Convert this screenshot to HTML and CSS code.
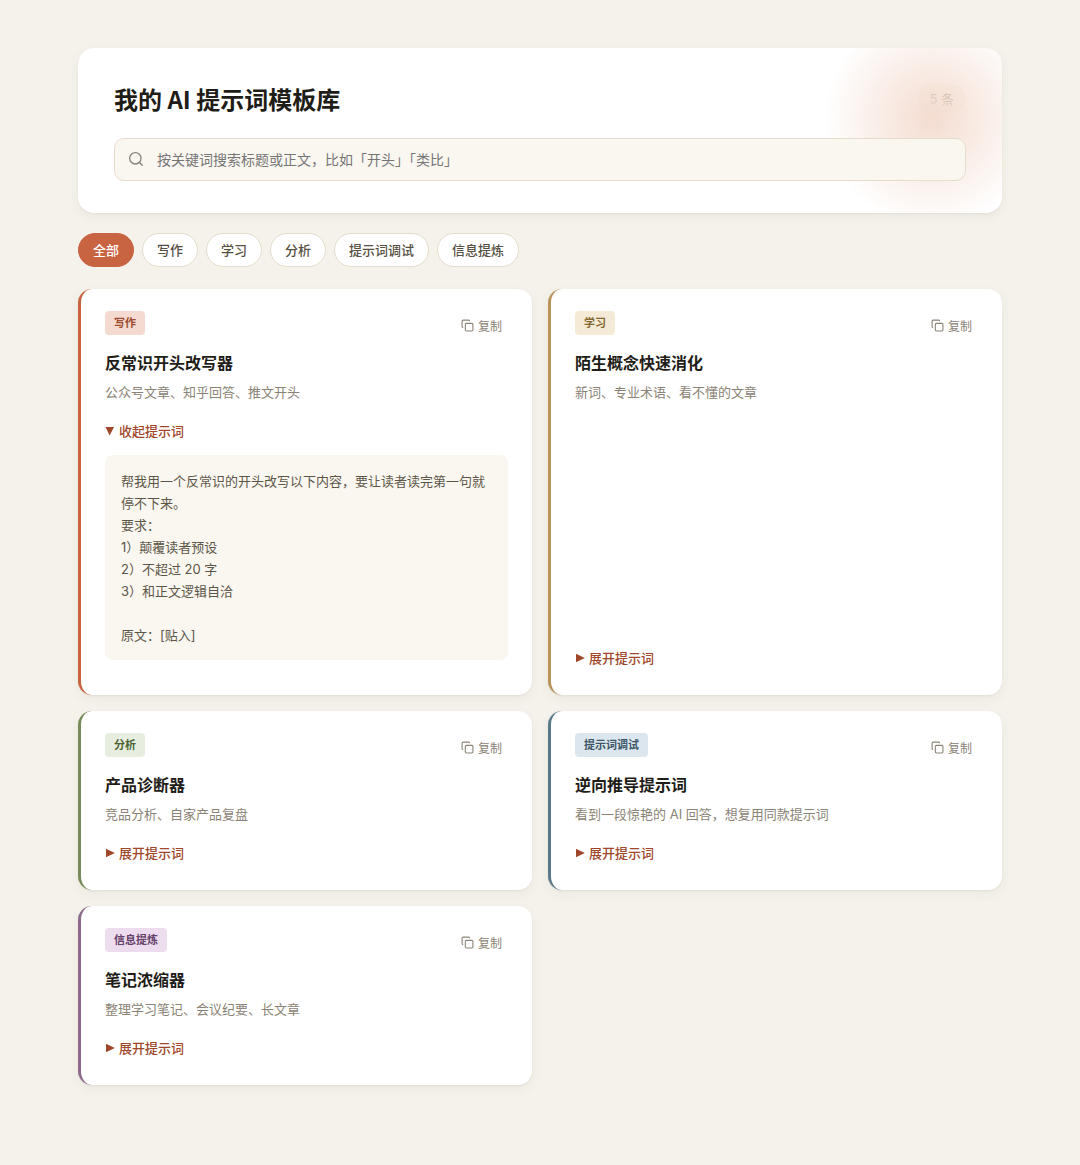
FILE: index.html
```html
<!DOCTYPE html>
<html lang="zh-CN">

<head>
    <meta charset="UTF-8">
    <meta name="viewport" content="width=device-width, initial-scale=1.0">
    <title>我的 AI 提示词模板库</title>
    <link rel="stylesheet" href="styles.css">
</head>

<body>
    <!-- shared icons -->
    <svg class="sprite" aria-hidden="true">
        <symbol id="icon-copy" viewBox="0 0 24 24">
            <rect x="8" y="8" width="14" height="14" rx="2" />
            <path d="M4 16c-1.1 0-2-.9-2-2V4c0-1.1.9-2 2-2h10c1.1 0 2 .9 2 2" />
        </symbol>
        <symbol id="icon-right" viewBox="0 0 10 10">
            <path d="M1 0.8L9.8 5L1 9.2z" />
        </symbol>
        <symbol id="icon-down" viewBox="0 0 10 10">
            <path d="M0.4 1H9L4.7 9.6z" />
        </symbol>
    </svg>

    <div class="container">
        <header class="header">
            <div class="header-top">
                <h1>我的 AI 提示词模板库</h1>
                <span class="count">5 条</span>
            </div>
            <div class="search">
                <svg class="search-icon" viewBox="0 0 24 24" aria-hidden="true">
                    <circle cx="11" cy="11" r="8.5" />
                    <path d="M21.3 21.3l-4.3-4.3" />
                </svg>
                <input type="text" class="search-input" aria-label="搜索提示词" placeholder="按关键词搜索标题或正文，比如「开头」「类比」">
            </div>
        </header>

        <nav class="filters" aria-label="分类">
            <button type="button" class="chip active">全部</button>
            <button type="button" class="chip">写作</button>
            <button type="button" class="chip">学习</button>
            <button type="button" class="chip">分析</button>
            <button type="button" class="chip">提示词调试</button>
            <button type="button" class="chip">信息提炼</button>
        </nav>

        <main class="grid">
            <article class="card writing">
                <div class="card-top">
                    <span class="tag">写作</span>
                    <button type="button" class="copy"><svg aria-hidden="true"><use href="#icon-copy" /></svg>复制</button>
                </div>
                <h2>反常识开头改写器</h2>
                <p class="desc">公众号文章、知乎回答、推文开头</p>
                <button type="button" class="toggle" aria-expanded="true"><svg aria-hidden="true"><use href="#icon-down" /></svg>收起提示词</button>
                <div class="prompt">帮我用一个反常识的开头改写以下内容，要让读者读完第一句就停不下来。
要求：
1）颠覆读者预设
2）不超过 20 字
3）和正文逻辑自洽

原文：[贴入]</div>
            </article>

            <article class="card study">
                <div class="card-top">
                    <span class="tag">学习</span>
                    <button type="button" class="copy"><svg aria-hidden="true"><use href="#icon-copy" /></svg>复制</button>
                </div>
                <h2>陌生概念快速消化</h2>
                <p class="desc">新词、专业术语、看不懂的文章</p>
                <button type="button" class="toggle" aria-expanded="false"><svg aria-hidden="true"><use href="#icon-right" /></svg>展开提示词</button>
            </article>

            <article class="card analysis">
                <div class="card-top">
                    <span class="tag">分析</span>
                    <button type="button" class="copy"><svg aria-hidden="true"><use href="#icon-copy" /></svg>复制</button>
                </div>
                <h2>产品诊断器</h2>
                <p class="desc">竞品分析、自家产品复盘</p>
                <button type="button" class="toggle" aria-expanded="false"><svg aria-hidden="true"><use href="#icon-right" /></svg>展开提示词</button>
            </article>

            <article class="card debug">
                <div class="card-top">
                    <span class="tag">提示词调试</span>
                    <button type="button" class="copy"><svg aria-hidden="true"><use href="#icon-copy" /></svg>复制</button>
                </div>
                <h2>逆向推导提示词</h2>
                <p class="desc">看到一段惊艳的 AI 回答，想复用同款提示词</p>
                <button type="button" class="toggle" aria-expanded="false"><svg aria-hidden="true"><use href="#icon-right" /></svg>展开提示词</button>
            </article>

            <article class="card extract">
                <div class="card-top">
                    <span class="tag">信息提炼</span>
                    <button type="button" class="copy"><svg aria-hidden="true"><use href="#icon-copy" /></svg>复制</button>
                </div>
                <h2>笔记浓缩器</h2>
                <p class="desc">整理学习笔记、会议纪要、长文章</p>
                <button type="button" class="toggle" aria-expanded="false"><svg aria-hidden="true"><use href="#icon-right" /></svg>展开提示词</button>
            </article>
        </main>
    </div>
</body>

</html>
```
FILE: styles.css
```css
* {
    margin: 0;
    padding: 0;
    box-sizing: border-box;
}

body {
    min-height: 100vh;
    background-color: #f5f2eb;
    color: #1f1d18;
    font-family: Inter, "Noto Sans CJK SC", sans-serif;
    font-size: 13px;
}

button,
input {
    font-family: inherit;
}

button {
    cursor: pointer;
}

.sprite {
    display: none;
}

.container {
    max-width: 980px;
    margin: 0 auto;
    padding: 48px 28px 80px;
}

/* header */
.header {
    position: relative;
    overflow: hidden;
    margin-bottom: 20px;
    padding: 32px 36px;
    background-color: #fff;
    border-radius: 16px;
    box-shadow: 0 1px 2px rgba(60, 50, 30, 0.06), 0 4px 12px rgba(60, 50, 30, 0.05);
}

/* soft glow in the corner, lies over the count badge */
.header::before {
    content: "";
    position: absolute;
    top: -80px;
    right: -80px;
    width: 300px;
    height: 300px;
    background: radial-gradient(closest-side, #f4dcd0 0%, transparent 72%);
    pointer-events: none;
}

.header-top {
    display: flex;
    justify-content: space-between;
    align-items: center;
    margin-bottom: 20px;
}

h1 {
    font-family: "Noto Sans CJK SC", sans-serif;
    font-size: 24px;
    line-height: 38px;
    font-weight: 700;
}

.count {
    padding: 4px 12px;
    background-color: #faf7f0;
    border-radius: 14px;
    color: #8a8375;
    font-size: 13px;
    line-height: 20px;
}

.search {
    position: relative;
}

.search-icon {
    position: absolute;
    left: 14px;
    top: 13px;
    width: 16px;
    height: 16px;
    fill: none;
    stroke: #8a8375;
    stroke-width: 2;
    stroke-linecap: round;
}

.search-input {
    display: block;
    width: 100%;
    height: 43px;
    padding: 0 16px 0 42px;
    background-color: #faf7f0;
    border: 1px solid #e5dccb;
    border-radius: 10px;
    color: #1f1d18;
    font-size: 14px;
}

.search-input::placeholder {
    color: #757575;
}

/* filters */
.filters {
    display: flex;
    flex-wrap: wrap;
    gap: 8px;
    margin-bottom: 22px;
}

.chip {
    height: 34px;
    padding: 0 14px 2px;
    background-color: #fff;
    border: 1px solid #e5dccb;
    border-radius: 17px;
    color: #565042;
    font-size: 13px;
    font-weight: 500;
}

.chip.active {
    background-color: #c96442;
    border-color: #c96442;
    color: #fff;
}

/* cards */
.grid {
    display: grid;
    grid-template-columns: 1fr 1fr;
    gap: 16px;
}

.card {
    display: flex;
    flex-direction: column;
    align-items: flex-start;
    padding: 22px 24px;
    background-color: #fff;
    border-left: 3px solid #c96442;
    border-radius: 14px;
    box-shadow: 0 1px 2px rgba(60, 50, 30, 0.06), 0 4px 12px rgba(60, 50, 30, 0.05);
}

.card-top {
    display: flex;
    justify-content: space-between;
    align-items: flex-start;
    align-self: stretch;
    margin-bottom: 9px;
}

.tag {
    padding: 0 9px;
    background-color: #f5dad1;
    border-radius: 4px;
    color: #9e4a2e;
    font-size: 11px;
    font-weight: 600;
    line-height: 24px;
}

.copy {
    display: flex;
    align-items: center;
    gap: 4px;
    height: 30px;
    padding: 0 6px 2px;
    background: none;
    border: none;
    color: #8a8375;
    font-size: 12px;
}

.copy svg {
    width: 13px;
    height: 13px;
    fill: none;
    stroke: currentColor;
    stroke-width: 2;
}

h2 {
    margin-bottom: 6px;
    font-size: 16px;
    font-weight: 600;
    line-height: 26px;
}

.desc {
    margin-bottom: 13px;
    color: #8a8375;
    line-height: 21px;
}

.toggle {
    display: flex;
    align-items: center;
    gap: 4px;
    height: 30px;
    margin-top: auto;
    padding-bottom: 2px;
    background: none;
    border: none;
    color: #a0462a;
    font-size: 13px;
    font-weight: 500;
}

.toggle svg {
    width: 10px;
    height: 10px;
    margin-top: 2px;
    fill: currentColor;
}

.prompt {
    align-self: stretch;
    margin: 9px 0 13px;
    padding: 15px 16px 14px;
    background-color: #faf7f0;
    border-radius: 8px;
    color: #5c5648;
    line-height: 22px;
    white-space: pre-wrap;
}

.study {
    border-left-color: #b8935a;
}

.study .tag {
    background-color: #f4ead5;
    color: #84682f;
}

.analysis {
    border-left-color: #768c5a;
}

.analysis .tag {
    background-color: #e7eedf;
    color: #4b6334;
}

.debug {
    border-left-color: #5a7a8c;
}

.debug .tag {
    background-color: #dce6ee;
    color: #3b5566;
}

.extract {
    border-left-color: #8c6a8c;
}

.extract .tag {
    background-color: #ecdcee;
    color: #64406a;
}

@media (max-width: 720px) {
    .grid {
        grid-template-columns: 1fr;
    }
}
```
